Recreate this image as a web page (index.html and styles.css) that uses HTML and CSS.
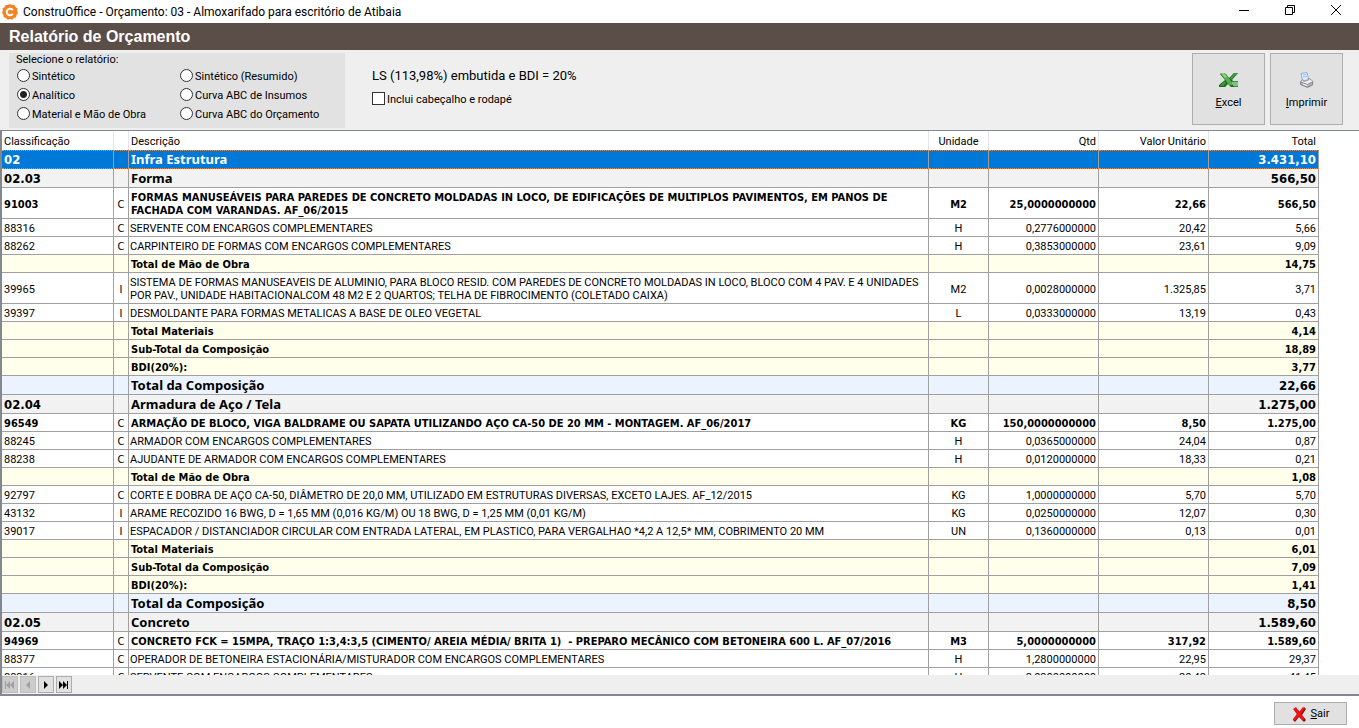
FILE: index.html
```html
<!DOCTYPE html>
<html lang="pt-BR">
<head>
<meta charset="utf-8">
<title>ConstruOffice - Orçamento: 03 - Almoxarifado para escritório de Atibaia</title>
<link rel="stylesheet" href="styles.css">
</head>
<body>
<header class="titlebar">
  <svg class="logo" viewBox="0 0 16 16" aria-hidden="true"><path fill="#f58220" d="M8 0l2 1 2.300-.2L13.500 3l2 1.500L15.200 7 16 9l-1.500 2-.4 2.300-2.300.8L10 15.800 8 15l-2.300.8L4 14l-2.300-.8L1.400 11 0 9l.8-2.200L.5 4.500 2.500 3.200 3.700 1 6 1z"/><path fill="none" stroke="#fff" stroke-width="2" d="M10.800 6.200A3.300 3.300 0 1 0 10.800 9.800"/></svg>
  <span class="window-title">ConstruOffice - Orçamento: 03 - Almoxarifado para escritório de Atibaia</span>
  <div class="window-buttons">
    <button type="button" aria-label="Minimizar"><svg viewBox="0 0 12 12"><path d="M1 6.500h10"/></svg></button>
    <button type="button" aria-label="Restaurar"><svg viewBox="0 0 12 12"><path d="M1.500 3.500h7v7h-7zM3.500 3.500v-2h7v7h-2"/></svg></button>
    <button type="button" aria-label="Fechar"><svg viewBox="0 0 12 12"><path d="M1 1l10 10M11 1L1 11"/></svg></button>
  </div>
</header>
<h1 class="page-title">Relatório de Orçamento</h1>
<section class="toolbar">
  <fieldset class="report-type">
    <legend>Selecione o relatório:</legend>
    <div class="options">
      <label><input type="radio" name="report"><span>Sintético</span></label>
      <label><input type="radio" name="report"><span>Sintético (Resumido)</span></label>
      <label><input type="radio" name="report" checked><span>Analítico</span></label>
      <label><input type="radio" name="report"><span>Curva ABC de Insumos</span></label>
      <label><input type="radio" name="report"><span>Material e Mão de Obra</span></label>
      <label><input type="radio" name="report"><span>Curva ABC do Orçamento</span></label>
    </div>
  </fieldset>
  <div class="settings">
    <p>LS (113,98%) embutida e BDI = 20%</p>
    <label><input type="checkbox"><span>Inclui cabeçalho e rodapé</span></label>
  </div>
  <div class="actions">
    <button type="button" class="action">
      <svg viewBox="0 0 20 16" aria-hidden="true"><path fill="#1d6b22" d="M1 2h6l3 4 5-5h4l-6 7 6 5v2h-7l-3-3-3 3H0v-2l6-5z"/><path fill="#55ad4e" d="M1 1h5l9 12h-5z"/><path fill="#8bd07f" d="M2 1h3l3 4-2 1z"/><path fill="#3f9640" d="M15 1h4l-7 7-1-2zM5 9l2 2-3 3H1z"/><path fill="#3b8f3b" d="M13 9h6v6h-4z"/><path stroke="#dcebd9" fill="none" d="M13 11h6M14 13h5"/></svg>
      <span><u>E</u>xcel</span>
    </button>
    <button type="button" class="action">
      <svg viewBox="0 0 20 16" aria-hidden="true"><path fill="#dcecff" stroke="#8cb0e6" d="M4 1.500l6-1 1.500 7-6 1.500z"/><path stroke="#9fc2f2" d="M6 3l3-.5M6 5l4-.7"/><path fill="#eee" stroke="#999" d="M4 9l2-1.500.7 2 5-1.500V6l4 3v4l-5 2.500-7-3z"/><path fill="#bbb" stroke="#888" d="M3.500 10l7 2.500 5-2.500v2.500l-5 2.500-7-2.500z"/><path stroke="#fff" d="M6 12l4 1.500"/></svg>
      <span><u>I</u>mprimir</span>
    </button>
  </div>
</section>
<main class="grid-frame">
  <div class="grid-view">
    <table class="grid">
      <colgroup><col class="c-code"><col class="c-kind"><col><col class="c-unit"><col class="c-num"><col class="c-num"><col class="c-num"></colgroup>
      <thead><tr><th>Classificação</th><th></th><th>Descrição</th><th>Unidade</th><th>Qtd</th><th>Valor Unitário</th><th>Total</th></tr></thead>
      <tbody>
        <tr class="group selected"><td>02</td><td></td><td>Infra Estrutura</td><td></td><td></td><td></td><td>3.431,10</td></tr>
        <tr class="group"><td>02.03</td><td></td><td>Forma</td><td></td><td></td><td></td><td>566,50</td></tr>
        <tr class="service"><td>91003</td><td>C</td><td>FORMAS MANUSEÁVEIS PARA PAREDES DE CONCRETO MOLDADAS IN LOCO, DE EDIFICAÇÕES DE MULTIPLOS PAVIMENTOS, EM PANOS DE<br>FACHADA COM VARANDAS. AF_06/2015</td><td>M2</td><td>25,0000000000</td><td>22,66</td><td>566,50</td></tr>
        <tr><td>88316</td><td>C</td><td>SERVENTE COM ENCARGOS COMPLEMENTARES</td><td>H</td><td>0,2776000000</td><td>20,42</td><td>5,66</td></tr>
        <tr><td>88262</td><td>C</td><td>CARPINTEIRO DE FORMAS COM ENCARGOS COMPLEMENTARES</td><td>H</td><td>0,3853000000</td><td>23,61</td><td>9,09</td></tr>
        <tr class="subtotal"><td></td><td></td><td>Total de Mão de Obra</td><td></td><td></td><td></td><td>14,75</td></tr>
        <tr><td>39965</td><td>I</td><td>SISTEMA DE FORMAS MANUSEAVEIS DE ALUMINIO, PARA BLOCO RESID. COM PAREDES DE CONCRETO MOLDADAS IN LOCO, BLOCO COM 4 PAV. E 4 UNIDADES<br>POR PAV., UNIDADE HABITACIONALCOM 48 M2 E 2 QUARTOS; TELHA DE FIBROCIMENTO (COLETADO CAIXA)</td><td>M2</td><td>0,0028000000</td><td>1.325,85</td><td>3,71</td></tr>
        <tr><td>39397</td><td>I</td><td>DESMOLDANTE PARA FORMAS METALICAS A BASE DE OLEO VEGETAL</td><td>L</td><td>0,0333000000</td><td>13,19</td><td>0,43</td></tr>
        <tr class="subtotal"><td></td><td></td><td>Total Materiais</td><td></td><td></td><td></td><td>4,14</td></tr>
        <tr class="subtotal"><td></td><td></td><td>Sub-Total da Composição</td><td></td><td></td><td></td><td>18,89</td></tr>
        <tr class="subtotal"><td></td><td></td><td>BDI(20%):</td><td></td><td></td><td></td><td>3,77</td></tr>
        <tr class="total"><td></td><td></td><td>Total da Composição</td><td></td><td></td><td></td><td>22,66</td></tr>
        <tr class="group"><td>02.04</td><td></td><td>Armadura de Aço / Tela</td><td></td><td></td><td></td><td>1.275,00</td></tr>
        <tr class="service"><td>96549</td><td>C</td><td>ARMAÇÃO DE BLOCO, VIGA BALDRAME OU SAPATA UTILIZANDO AÇO CA-50 DE 20 MM - MONTAGEM. AF_06/2017</td><td>KG</td><td>150,0000000000</td><td>8,50</td><td>1.275,00</td></tr>
        <tr><td>88245</td><td>C</td><td>ARMADOR COM ENCARGOS COMPLEMENTARES</td><td>H</td><td>0,0365000000</td><td>24,04</td><td>0,87</td></tr>
        <tr><td>88238</td><td>C</td><td>AJUDANTE DE ARMADOR COM ENCARGOS COMPLEMENTARES</td><td>H</td><td>0,0120000000</td><td>18,33</td><td>0,21</td></tr>
        <tr class="subtotal"><td></td><td></td><td>Total de Mão de Obra</td><td></td><td></td><td></td><td>1,08</td></tr>
        <tr><td>92797</td><td>C</td><td>CORTE E DOBRA DE AÇO CA-50, DIÂMETRO DE 20,0 MM, UTILIZADO EM ESTRUTURAS DIVERSAS, EXCETO LAJES. AF_12/2015</td><td>KG</td><td>1,0000000000</td><td>5,70</td><td>5,70</td></tr>
        <tr><td>43132</td><td>I</td><td>ARAME RECOZIDO 16 BWG, D = 1,65 MM (0,016 KG/M) OU 18 BWG, D = 1,25 MM (0,01 KG/M)</td><td>KG</td><td>0,0250000000</td><td>12,07</td><td>0,30</td></tr>
        <tr><td>39017</td><td>I</td><td>ESPACADOR / DISTANCIADOR CIRCULAR COM ENTRADA LATERAL, EM PLASTICO, PARA VERGALHAO *4,2 A 12,5* MM, COBRIMENTO 20 MM</td><td>UN</td><td>0,1360000000</td><td>0,13</td><td>0,01</td></tr>
        <tr class="subtotal"><td></td><td></td><td>Total Materiais</td><td></td><td></td><td></td><td>6,01</td></tr>
        <tr class="subtotal"><td></td><td></td><td>Sub-Total da Composição</td><td></td><td></td><td></td><td>7,09</td></tr>
        <tr class="subtotal"><td></td><td></td><td>BDI(20%):</td><td></td><td></td><td></td><td>1,41</td></tr>
        <tr class="total"><td></td><td></td><td>Total da Composição</td><td></td><td></td><td></td><td>8,50</td></tr>
        <tr class="group"><td>02.05</td><td></td><td>Concreto</td><td></td><td></td><td></td><td>1.589,60</td></tr>
        <tr class="service"><td>94969</td><td>C</td><td>CONCRETO FCK = 15MPA, TRAÇO 1:3,4:3,5 (CIMENTO/ AREIA MÉDIA/ BRITA 1) &nbsp;- PREPARO MECÂNICO COM BETONEIRA 600 L. AF_07/2016</td><td>M3</td><td>5,0000000000</td><td>317,92</td><td>1.589,60</td></tr>
        <tr><td>88377</td><td>C</td><td>OPERADOR DE BETONEIRA ESTACIONÁRIA/MISTURADOR COM ENCARGOS COMPLEMENTARES</td><td>H</td><td>1,2800000000</td><td>22,95</td><td>29,37</td></tr>
        <tr><td>88316</td><td>C</td><td>SERVENTE COM ENCARGOS COMPLEMENTARES</td><td>H</td><td>2,0300000000</td><td>20,42</td><td>41,45</td></tr>
      </tbody>
    </table>
  </div>
  <nav class="record-nav" aria-label="Registros">
    <button type="button" disabled aria-label="Primeiro"><svg viewBox="0 0 12 10"><path d="M1 1h1v8H1zM6 1v8L2 5zM10 1v8L6 5z"/></svg></button>
    <button type="button" disabled aria-label="Anterior"><svg viewBox="0 0 12 10"><path d="M8 1v8L4 5z"/></svg></button>
    <button type="button" aria-label="Próximo"><svg viewBox="0 0 12 10"><path d="M4 1v8l4-4z"/></svg></button>
    <button type="button" aria-label="Último"><svg viewBox="0 0 12 10"><path d="M1 1v8l4-4zM5 1v8l4-4zM9 1h1v8H9z"/></svg></button>
  </nav>
</main>
<footer class="footer">
  <button type="button" class="exit">
    <svg viewBox="0 0 14 16" aria-hidden="true"><path fill="#7d0c0c" d="M2 4l2-2 4 4 4-5 2 2-4 6 4 5-2 2-5-5-4 5-2-2 4-6z"/><path fill="#ee1414" d="M1 3l3-2 3 5 4-5 2 2-4 5 4 5-2 2-4-5-4 5-2-2 4-5z"/></svg>
    <span><u>S</u>air</span>
  </button>
</footer>
</body>
</html>
```
FILE: styles.css
```css
* { box-sizing: border-box; }
body {
  margin: 0;
  height: 100vh;
  display: flex;
  flex-direction: column;
  overflow: hidden;
  background: #fff;
  color: #000;
  font: 11px/13px Roboto, Tahoma, sans-serif;
}
button { font: inherit; color: inherit; margin: 0; padding: 0; }
svg { display: block; }

.titlebar {
  display: flex;
  align-items: center;
  height: 23px;
  flex: none;
  padding-left: 2px;
}
.logo { width: 16px; height: 16px; margin-right: 5px; }
.window-title { font-size: 12px; line-height: 16px; }
.window-buttons { margin-left: auto; display: flex; align-self: flex-start; }
.window-buttons button {
  width: 46px;
  height: 20px;
  border: 0;
  background: none;
  display: grid;
  place-items: center;
}
.window-buttons svg { width: 12px; height: 12px; fill: none; stroke: #000; }

.page-title {
  margin: 0;
  padding: 4px 9px 3px;
  flex: none;
  background: #5b4e49;
  color: #fff;
  font: bold 16px/20px "Liberation Sans", Arial, sans-serif;
}

.toolbar {
  display: flex;
  flex: none;
  height: 80px;
  padding: 3px 16px 2px 9px;
  background: #efefef;
}
.report-type {
  margin: 0;
  border: 0;
  padding: 0 7px;
  width: 336px;
  background: #e2e2e2;
}
.report-type legend { float: left; width: 100%; padding: 0; line-height: 13px; }
.options {
  display: grid;
  grid-template-columns: 163px 1fr;
  grid-auto-rows: 19px;
  clear: both;
  padding-left: 1px;
}
.options label, .settings label { display: flex; align-items: center; gap: 2px; }
.options span, .settings span { padding-top: 2px; }
input { appearance: none; margin: 0; width: 13px; height: 13px; background: #fff; border: 1px solid #333; }
input[type="radio"] { border-radius: 50%; }
input[type="radio"]:checked { background: radial-gradient(circle, #222 0 3px, #fff 4px); }
.settings { padding: 15px 0 0 27px; }
.settings p { margin: 0 0 7px; font-size: 13px; line-height: 16px; }
.actions { display: flex; gap: 5px; margin-left: auto; }
.action {
  width: 73px;
  height: 72px;
  border: 1px solid #adadad;
  background: #e1e1e1;
  display: flex;
  flex-direction: column;
  align-items: center;
  justify-content: center;
  gap: 8px;
  padding-top: 3px;
}
.action svg { width: 20px; height: 16px; }

.grid-frame {
  flex: 1;
  min-height: 0;
  display: flex;
  flex-direction: column;
  border: solid #828790;
  border-width: 1px 0 2px 2px;
}
.grid-view { flex: 1; min-height: 0; overflow: hidden; }
.grid { width: calc(100% - 40px); table-layout: fixed; border-collapse: separate; border-spacing: 0; }
.c-code { width: 112px; }
.c-kind { width: 15px; }
.c-unit { width: 60px; }
.c-num { width: 110px; }
.grid th {
  height: 19px;
  padding: 2px 2px 0;
  font-weight: normal;
  text-align: left;
  border-right: 1px solid #e5e5e5;
}
.grid th:last-child { border-right: 0; padding-right: 3px; }
.grid td {
  height: 18px;
  padding: 3px 2px 1px;
  border: solid #a0a0a0;
  border-width: 0 1px 1px 0;
  white-space: nowrap;
}
.grid td:nth-child(3) { padding-left: 1px; }
.grid :is(td, th):nth-child(4) { text-align: center; }
.grid :is(td, th):nth-child(n+5) { text-align: right; }
.grid :is(.group, .service, .subtotal, .total) td {
  font-family: "DejaVu Sans Condensed", "DejaVu Sans", Tahoma, sans-serif;
  font-weight: bold;
  padding-left: 2px;
}
.grid tr td:nth-child(2) {
  text-align: center;
  padding-left: 0;
  padding-right: 0;
  font-family: "DejaVu Sans Condensed", Tahoma, sans-serif;
}
.grid .service td:nth-child(2) { font-weight: normal; padding-left: 0; }
.grid :is(.group, .total) td {
  height: 19px;
  padding-top: 2px;
  padding-bottom: 2px;
  font-size: 13px;
}
.grid :is(.group, .total) td:nth-child(3) { font-family: "Noto Sans", Tahoma, sans-serif; }
.group td { background: #f2f2f2; }
.subtotal td { background: #ffffec; }
.total td { background: #eaf3ff; }
.grid .selected td {
  background: #0078d7;
  color: #fff;
  border-bottom: 1px dotted #ff8728;
  border-top: 1px dotted #ff8728;
  padding-top: 1px;
}

.record-nav { display: flex; gap: 2px; height: 19px; flex: none; background: #efefef; }
.record-nav button {
  width: 16px;
  height: 17px;
  margin-top: 1px;
  border: 1px solid #adadad;
  background: #e1e1e1;
  display: grid;
  place-items: center;
}
.record-nav button:disabled { background: #ccc; border-color: #bfbfbf; color: #a0a0a0; }
.record-nav svg { width: 12px; height: 10px; fill: currentColor; }

.footer { display: flex; justify-content: flex-end; flex: none; padding: 6px 12px 3px; }
.exit {
  width: 73px;
  height: 23px;
  border: 1px solid #adadad;
  background: #e1e1e1;
  display: flex;
  align-items: center;
  justify-content: center;
  gap: 5px;
}
.exit svg { width: 14px; height: 16px; }
```
